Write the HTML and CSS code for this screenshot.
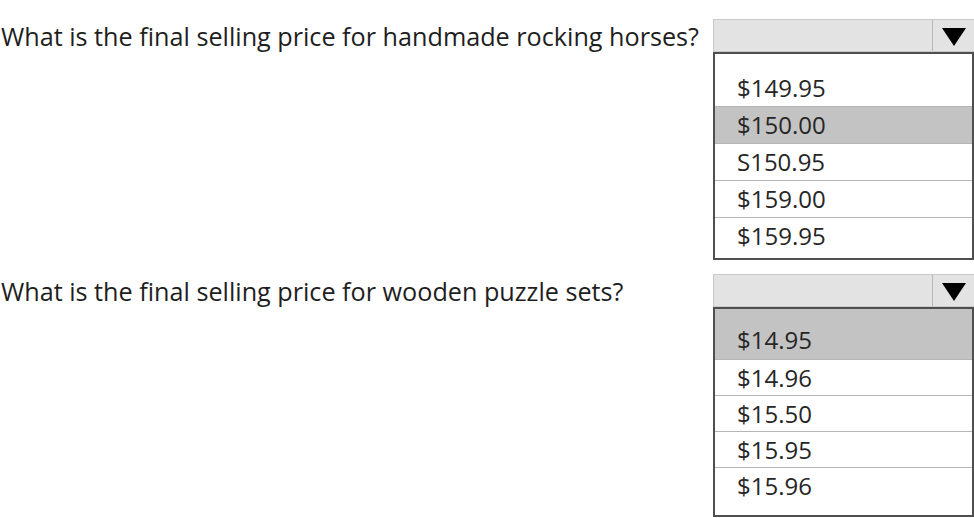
FILE: index.html
```html
<!DOCTYPE html>
<html>
<head>
<meta charset="utf-8">
<link rel="stylesheet" href="styles.css">
</head>
<body>
<div class="page">
  <div class="question">
    <div class="label">What is the final selling price for handmade rocking horses?</div>
    <div class="dropdown">
      <div class="dd-head"><span class="dd-value"></span><span class="dd-arrow"><svg width="24" height="18" viewBox="0 0 24 18"><polygon points="0,0 24,0 12,18" fill="#000"/></svg></span></div>
      <ul class="dd-list rows-37">
        <li>$149.95</li>
        <li class="sel">$150.00</li>
        <li>S150.95</li>
        <li>$159.00</li>
        <li>$159.95</li>
      </ul>
    </div>
  </div>
  <div class="question">
    <div class="label">What is the final selling price for wooden puzzle sets?</div>
    <div class="dropdown">
      <div class="dd-head"><span class="dd-value"></span><span class="dd-arrow"><svg width="24" height="18" viewBox="0 0 24 18"><polygon points="0,0 24,0 12,18" fill="#000"/></svg></span></div>
      <ul class="dd-list rows-36">
        <li class="sel">$14.95</li>
        <li>$14.96</li>
        <li>$15.50</li>
        <li>$15.95</li>
        <li>$15.96</li>
      </ul>
    </div>
  </div>
</div>
</body>
</html>
```

FILE: styles.css
```css
html, body {
  margin: 0;
  padding: 0;
  background: #fff;
}
body {
  width: 974px;
  height: 518px;
  overflow: hidden;
  font-family: "Open Sans", "Noto Sans", sans-serif;
  color: #222;
}
.page {
  padding-top: 19px;
  display: flex;
  flex-direction: column;
  gap: 14px;
}
.question {
  display: grid;
  grid-template-columns: 713px 261px;
  align-items: start;
}
.label {
  height: 33px;
  display: flex;
  align-items: center;
  padding-left: 1px;
  font-size: 25.2px;
  white-space: nowrap;
  color: #1e1e1e;
}
.dropdown {
  display: flex;
  flex-direction: column;
}
.dd-head {
  height: 33px;
  box-sizing: border-box;
  background: #e3e3e3;
  border: 1px solid #c9c9c9;
  border-right: none;
  display: flex;
}
.dd-value {
  flex: 1;
}
.dd-arrow {
  width: 41px;
  border-left: 1px solid #b8b8b8;
  display: flex;
  align-items: center;
  justify-content: center;
  padding-top: 3px;
}
.dd-list {
  list-style: none;
  margin: 0;
  padding: 0;
  border: 2px solid #4f4f4f;
  font-size: 24px;
  color: #262626;
}
.dd-list li {
  padding-left: 22px;
  border-top: 1px solid #b5b5b5;
}
.dd-list li:first-child {
  border-top: none;
}
.rows-37 li { line-height: 36px; }
.rows-37 li:first-child { padding-top: 16px; }
.rows-37 { padding-bottom: 4px; }
.rows-36 li { line-height: 35px; }
.rows-36 li:first-child { padding-top: 13px; padding-bottom: 2px; }
.rows-36 { padding-bottom: 12px; }
.dd-list li.sel {
  background: #c3c3c3;
}
```
